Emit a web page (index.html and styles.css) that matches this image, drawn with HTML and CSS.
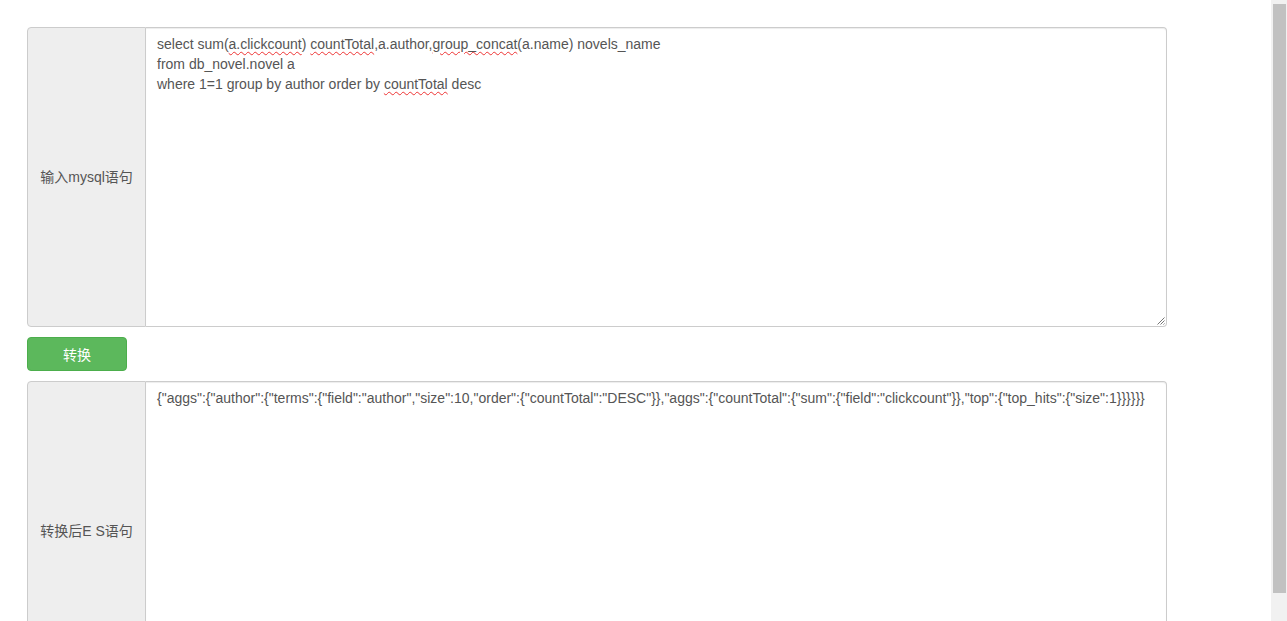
FILE: index.html
```html
<!DOCTYPE html>
<html lang="zh">
<head>
<meta charset="utf-8">
<title>SQL转ES</title>
<link rel="stylesheet" href="styles.css">
</head>
<body>
<div class="page">
  <div class="input-group">
    <div class="addon">输入mysql语句</div>
    <div class="field">
      <div class="text">select sum(<span class="err">a.clickcount</span>) <span class="err">countTotal</span>,a.author,<span class="err">group_concat</span>(a.name) novels_name
from db_novel.novel a
where 1=1 group by author order by <span class="err">countTotal</span> desc</div>
      <svg class="grip" width="9" height="9" viewBox="0 0 9 9"><path d="M8.5 1.5L1.5 8.5M8.5 4.5L4.5 8.5M8.5 7.5L7.5 8.5" stroke="#777" stroke-width="1" fill="none"/></svg>
    </div>
  </div>
  <div class="actions">
    <button class="btn-success" type="button">转换</button>
  </div>
  <div class="input-group">
    <div class="addon">转换后E S语句</div>
    <div class="field">
      <div class="text">{"aggs":{"author":{"terms":{"field":"author","size":10,"order":{"countTotal":"DESC"}},"aggs":{"countTotal":{"sum":{"field":"clickcount"}},"top":{"top_hits":{"size":1}}}}}}</div>
    </div>
  </div>
</div>
<div class="scrollbar"><div class="thumb"></div></div>
</body>
</html>
```

FILE: styles.css
```css
html, body {
  margin: 0;
  padding: 0;
  background: #fff;
}
body {
  font-family: "Liberation Sans", Arial, "Noto Sans CJK SC", sans-serif;
  font-size: 14px;
  line-height: 20px;
  color: #555;
}
.page {
  width: 1140px;
  padding: 27px 0 10px 27px;
  display: flex;
  flex-direction: column;
  gap: 10px;
}
.input-group {
  display: flex;
  height: 300px;
}
.addon {
  width: 117px;
  flex: none;
  display: flex;
  align-items: center;
  justify-content: center;
  background: #eee;
  border: 1px solid #ccc;
  border-radius: 4px 0 0 4px;
  color: #555;
  white-space: nowrap;
}
.field {
  position: relative;
  flex: 1;
  border: 1px solid #ccc;
  border-left: 0;
  border-radius: 0 4px 4px 0;
  padding: 6px 12px 6px 11px;
  box-shadow: inset 0 1px 1px rgba(0,0,0,.075);
}
.text {
  white-space: pre-wrap;
  color: #555;
}
.err {
  text-decoration: underline wavy #e33;
  text-decoration-thickness: 1px;
  text-underline-offset: 2px;
}
.grip {
  position: absolute;
  right: 1px;
  bottom: 1px;
}
.actions {
  display: flex;
}
.btn-success {
  width: 100px;
  height: 34px;
  background: #5cb85c;
  border: 1px solid #4cae4c;
  border-radius: 4px;
  color: #fff;
  font-family: "Liberation Sans", Arial, "Noto Sans CJK SC", sans-serif;
  font-size: 14px;
  padding: 0;
}
.scrollbar {
  position: fixed;
  top: 0;
  right: 0;
  bottom: 0;
  width: 16px;
  background: #f1f1f1;
  padding: 4px 1px 0 2px;
  box-sizing: border-box;
}
.thumb {
  height: 589px;
  background: #c1c1c1;
}
```
